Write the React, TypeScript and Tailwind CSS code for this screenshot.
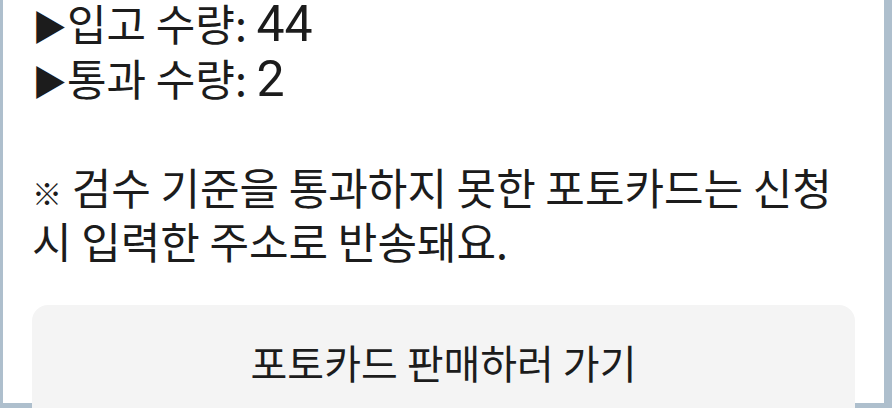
const Arrow = () => <span className="text-[35px]">▶</span>;

const Num = ({ children }: { children: React.ReactNode }) => (
  <span className="text-[50px] leading-none" style={{ fontFamily: 'Roboto, sans-serif' }}>
    {children}
  </span>
);

export default function App() {
  return (
    <div
      className="h-[408px] overflow-hidden bg-[#aebfcd] pl-[3px] pr-[8px]"
      style={{ fontFamily: "'Noto Sans CJK KR', sans-serif" }}
    >
      <div className="h-full bg-white px-[29px] text-[#1c1c1c]">
        <div className="-mt-[5px] text-[43px] leading-[54.5px]">
          <div className="h-[54.5px] whitespace-pre">
            <Arrow />입고 수량: <Num>44</Num>
          </div>
          <div className="h-[54.5px] whitespace-pre">
            <Arrow />통과 수량: <Num>2</Num>
          </div>
          <div className="h-[54.5px]" />
          <div className="h-[54.5px] whitespace-pre">
            <span className="text-[30px]">※</span> 검수 기준을 통과하지 못한 포토카드는 신청
          </div>
          <div className="h-[54.5px] whitespace-pre">시 입력한 주소로 반송돼요.</div>
        </div>
        <button className="mt-[37px] flex h-[120px] w-full items-start justify-center rounded-[16px] bg-[#f4f4f4] pt-[33px] text-[40px] leading-[48px] text-[#1c1c1c]">
          포토카드 판매하러 가기
        </button>
      </div>
    </div>
  );
}
